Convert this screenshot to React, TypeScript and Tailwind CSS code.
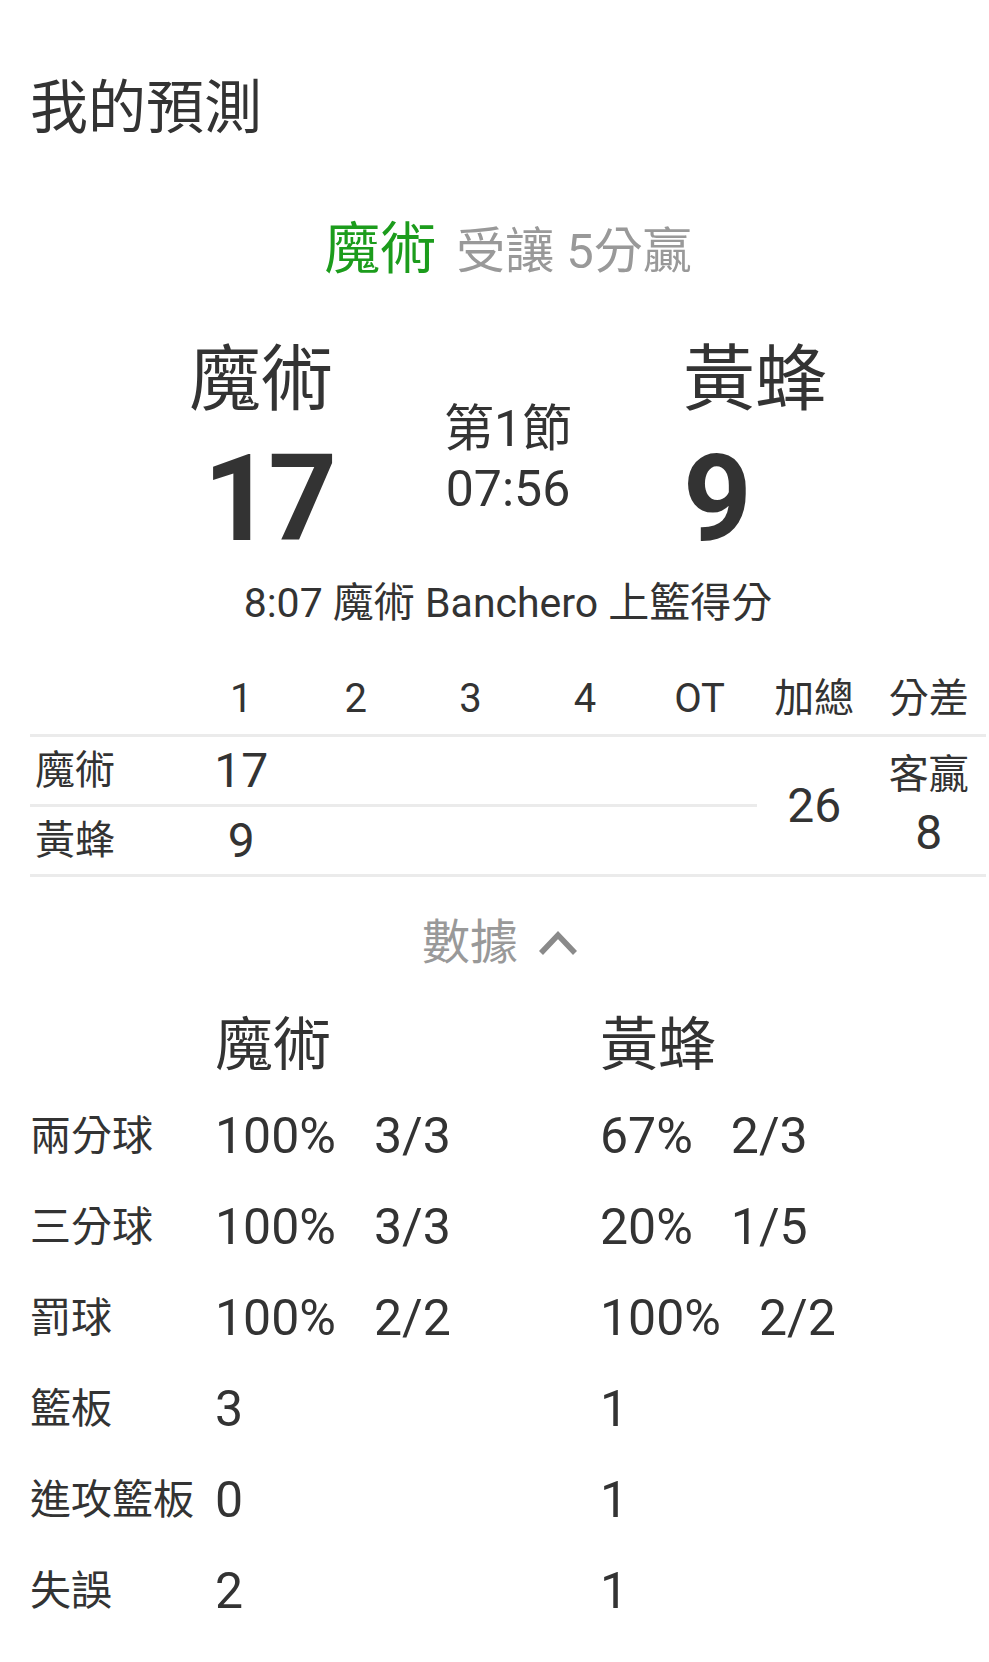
import React from "react";

const FONT = "font-['Roboto','Noto_Sans_CJK_TC',sans-serif]";

const quarters = ["1", "2", "3", "4", "OT"];

const stats = [
  { label: "兩分球", home: ["100%", "3/3"], away: ["67%", "2/3"] },
  { label: "三分球", home: ["100%", "3/3"], away: ["20%", "1/5"] },
  { label: "罰球", home: ["100%", "2/2"], away: ["100%", "2/2"] },
  { label: "籃板", home: ["3"], away: ["1"] },
  { label: "進攻籃板", home: ["0"], away: ["1"] },
  { label: "失誤", home: ["2"], away: ["1"] },
];

function ScoreBoard() {
  return (
    <div className="mt-[67px] grid grid-cols-[1fr_350px_1fr]">
      <div className="flex flex-col items-end">
        <div className="text-[72px] leading-none">魔術</div>
        <div className="mt-[23px] text-[120px] font-bold leading-none tracking-[-4px]">17</div>
      </div>
      <div className="flex flex-col items-center pt-[60px]">
        <div className="text-[50px] leading-none">第1節</div>
        <div className="mt-[10px] text-[50px] leading-none">07:56</div>
      </div>
      <div className="flex flex-col items-start">
        <div className="text-[72px] leading-none">黃蜂</div>
        <div className="mt-[23px] text-[120px] font-bold leading-none">9</div>
      </div>
    </div>
  );
}

function QuarterTable() {
  const line = "border-b-[3px] border-[#ebebeb]";
  return (
    <div className="mt-[40px] grid grid-cols-[154px_repeat(7,1fr)]">
      <div className={`h-[73px] ${line}`} />
      {quarters.map((q) => (
        <div key={q} className={`flex h-[73px] items-center justify-center text-[40px] ${line}`}>
          {q}
        </div>
      ))}
      <div className={`flex h-[73px] items-center justify-center text-[40px] ${line}`}>加總</div>
      <div className={`flex h-[73px] items-center justify-center text-[40px] ${line}`}>分差</div>

      <div className={`flex h-[70px] items-center pl-[5px] text-[40px] ${line}`}>魔術</div>
      <div className={`flex h-[70px] items-center justify-center text-[48px] ${line}`}>17</div>
      <div className={`h-[70px] ${line}`} />
      <div className={`h-[70px] ${line}`} />
      <div className={`h-[70px] ${line}`} />
      <div className={`h-[70px] ${line}`} />
      <div className={`row-span-2 flex items-center justify-center text-[48px] ${line}`}>26</div>
      <div className={`row-span-2 flex flex-col items-center justify-center leading-none ${line}`}>
        <span className="text-[40px]">客贏</span>
        <span className="mt-[14px] text-[48px]">8</span>
      </div>

      <div className={`flex h-[70px] items-center pl-[5px] text-[40px] ${line}`}>黃蜂</div>
      <div className={`flex h-[70px] items-center justify-center text-[48px] ${line}`}>9</div>
      <div className={`h-[70px] ${line}`} />
      <div className={`h-[70px] ${line}`} />
      <div className={`h-[70px] ${line}`} />
      <div className={`h-[70px] ${line}`} />
    </div>
  );
}

function Values({ v }: { v: string[] }) {
  return (
    <div className="flex gap-[38px] text-[50px]">
      {v.map((x, i) => (
        <span key={i}>{x}</span>
      ))}
    </div>
  );
}

function Stats() {
  return (
    <div className="mt-[33px]">
      <div className="grid h-[91px] grid-cols-[185px_385px_1fr] items-center">
        <div />
        <div className="text-[58px]">魔術</div>
        <div className="text-[58px]">黃蜂</div>
      </div>
      {stats.map((s) => (
        <div key={s.label} className="grid h-[91px] grid-cols-[185px_385px_1fr] items-center">
          <div className="text-[41px]">{s.label}</div>
          <Values v={s.home} />
          <Values v={s.away} />
        </div>
      ))}
    </div>
  );
}

export default function App() {
  return (
    <div className={`min-h-[1662px] w-full bg-white pl-[30px] pr-[3px] text-[#333333] ${FONT}`}>
      <div className="pt-[79px] text-[58px] leading-none">我的預測</div>

      <div className="mt-[84px] flex items-baseline justify-center leading-none">
        <span className="text-[56px] text-[#1c9c1c]">魔術</span>
        <span className="ml-[20px] text-[49px] text-[#999999]">受讓 5分贏</span>
      </div>

      <ScoreBoard />

      <div className="mt-[24px] text-center text-[41px] leading-none">8:07 魔術 Banchero 上籃得分</div>

      <QuarterTable />

      <div className="mt-[42px] flex items-center justify-center pr-[16px] text-[48px] leading-none text-[#999999]">
        <span>數據</span>
        <svg width="40" height="26" viewBox="0 0 40 26" className="ml-[20px]">
          <path d="M3 23 L20 5 L37 23" fill="none" stroke="#8a8a8a" strokeWidth="5.5" />
        </svg>
      </div>

      <Stats />
    </div>
  );
}
